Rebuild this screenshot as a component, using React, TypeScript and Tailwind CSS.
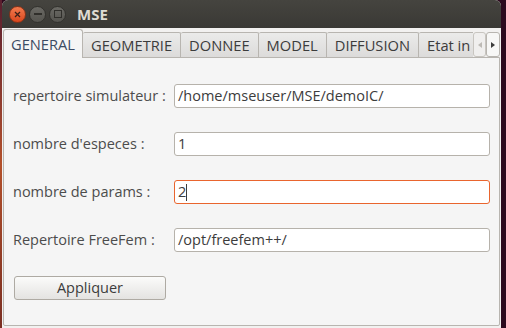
import { useState } from "react";

const tabs = ["GEOMETRIE", "DONNEE", "MODEL", "DIFFUSION", "Etat in"];

const fields = [
  { label: "repertoire simulateur :", value: "/home/mseuser/MSE/demoIC/" },
  { label: "nombre d'especes :", value: "1" },
  { label: "nombre de params :", value: "2", focused: true },
  { label: "Repertoire FreeFem :", value: "/opt/freefem++/" },
];

export default function App() {
  const [active] = useState("GENERAL");

  return (
    <div className="w-[506px] h-[328px] flex bg-[#2c0a1e] overflow-hidden" style={{ fontFamily: "'Open Sans', 'DejaVu Sans', sans-serif" }}>
      {/* desktop edge */}
      <div className="w-[2px] bg-gradient-to-b from-[#5a1f2e] via-[#b3502a] to-[#7a2f22]" />

      {/* Window */}
      <div className="w-[499px] flex flex-col bg-[#f2f1f0] rounded-t-[6px] overflow-hidden">
        {/* Title bar */}
        <div className="h-[28px] shrink-0 flex items-center bg-gradient-to-b from-[#45443f] to-[#3a3935] pl-[7px]">
          <div className="flex items-center gap-[3px]">
            <div className="w-[17px] h-[17px] rounded-full bg-gradient-to-b from-[#f27a4d] to-[#d9461c] border border-[#8a3318] flex items-center justify-center">
              <svg width="7" height="7" viewBox="0 0 7 7">
                <path d="M1 1L6 6M6 1L1 6" stroke="#3b2018" strokeWidth="1.3" />
              </svg>
            </div>
            <div className="w-[17px] h-[17px] rounded-full bg-gradient-to-b from-[#6a6964] to-[#55544f] border border-[#33322e] flex items-center justify-center">
              <div className="w-[8px] h-[1.5px] bg-[#302f2b]" />
            </div>
            <div className="w-[17px] h-[17px] rounded-full bg-gradient-to-b from-[#6a6964] to-[#55544f] border border-[#33322e] flex items-center justify-center">
              <div className="w-[8px] h-[8px] border-[1.5px] border-[#302f2b]" />
            </div>
          </div>
          <span className="ml-[11px] text-[15px] font-bold text-[#dfdbd2]">MSE</span>
        </div>

        {/* Tab strip */}
        <div className="h-[29px] shrink-0 flex items-end pl-[1px] pr-[1px]">
          <div className="h-[29px] w-[80px] flex items-center justify-center bg-[#f5f5f5] border border-b-0 border-[#b8b5b0] rounded-t-[3px] text-[14.7px] text-[#3c4b63] relative z-10 -mb-px">
            {active}
          </div>
          <div className="flex-1 flex items-end overflow-hidden h-[25px]">
            {tabs.map((t) => (
              <div
                key={t}
                className="h-[25px] shrink-0 px-[8px] flex items-center bg-gradient-to-b from-[#ebebea] to-[#dcdbda] border border-b-0 border-l-0 border-[#b8b5b0] rounded-t-[2px] text-[14.7px] text-[#3c3c3c]"
              >
                {t}
              </div>
            ))}
          </div>
          <div className="flex h-[25px] shrink-0">
            <div className="w-[13px] h-[25px] flex items-center justify-center bg-[#f0efee] border border-[#c8c5c0] rounded-[3px]">
              <svg width="4" height="6" viewBox="0 0 4 6"><path d="M4 0L0 3L4 6Z" fill="#bdbab5" /></svg>
            </div>
            <div className="w-[14px] h-[25px] flex items-center justify-center bg-[#f7f7f6] border border-[#b8b5b0] rounded-[3px]">
              <svg width="4" height="6" viewBox="0 0 4 6"><path d="M0 0L4 3L0 6Z" fill="#3c3c3c" /></svg>
            </div>
          </div>
        </div>

        {/* Panel */}
        <div className="flex-1 mx-[1px] mb-[2px] bg-[#f5f5f5] border border-[#b8b5b0] rounded-b-[2px] pt-[26px] pl-[9px] pr-[9px] flex flex-col gap-[24px]">
          {fields.map((f) => (
            <div key={f.label} className="flex items-center h-[24px]">
              <span className="w-[161px] shrink-0 text-[14.5px] text-[#4c4c4c]">{f.label}</span>
              <div
                className={`flex-1 h-[24px] rounded-[3px] bg-white border flex items-center pl-[3px] text-[14.5px] text-[#3c3c3c] ${
                  f.focused ? "border-[#e9652e]" : "border-[#b6b2ab]"
                }`}
              >
                {f.value}
                {f.focused && <span className="inline-block w-px h-[17px] bg-[#3c3c3c]" />}
              </div>
            </div>
          ))}
          <div className="h-[24px] w-[152px] ml-[1px] rounded-[3px] border border-[#aeaaa3] bg-gradient-to-b from-[#fbfbfa] to-[#e4e3e1] flex items-center justify-center text-[14.5px] text-[#3c3c3c]">
            Appliquer
          </div>
        </div>
      </div>

      <div className="flex-1" />
    </div>
  );
}
